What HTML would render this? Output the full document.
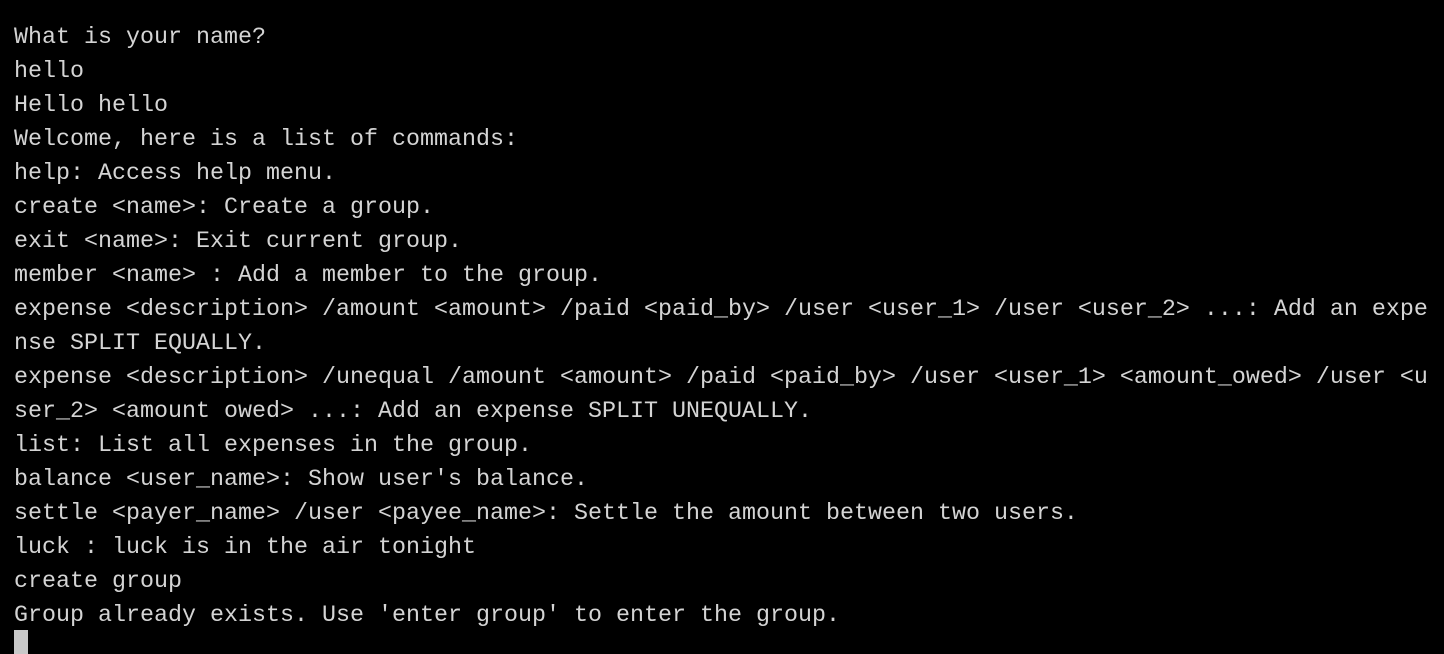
<!DOCTYPE html>
<html><head><style>
html,body{margin:0;padding:0;background:#000;width:1444px;height:654px;overflow:hidden}
pre{margin:0;position:absolute;left:14px;top:21px;font-family:"Liberation Mono",monospace;font-size:23.33px;line-height:34px;color:#d4d4d4;white-space:pre}
.c{position:absolute;left:14px;top:630px;width:14px;height:24px;background:#c8c8c8}
</style></head><body>
<pre>What is your name?
hello
Hello hello
Welcome, here is a list of commands:
help: Access help menu.
create &lt;name&gt;: Create a group.
exit &lt;name&gt;: Exit current group.
member &lt;name&gt; : Add a member to the group.
expense &lt;description&gt; /amount &lt;amount&gt; /paid &lt;paid_by&gt; /user &lt;user_1&gt; /user &lt;user_2&gt; ...: Add an expe
nse SPLIT EQUALLY.
expense &lt;description&gt; /unequal /amount &lt;amount&gt; /paid &lt;paid_by&gt; /user &lt;user_1&gt; &lt;amount_owed&gt; /user &lt;u
ser_2&gt; &lt;amount owed&gt; ...: Add an expense SPLIT UNEQUALLY.
list: List all expenses in the group.
balance &lt;user_name&gt;: Show user's balance.
settle &lt;payer_name&gt; /user &lt;payee_name&gt;: Settle the amount between two users.
luck : luck is in the air tonight
create group
Group already exists. Use 'enter group' to enter the group.</pre>
<div class="c"></div>
</body></html>
